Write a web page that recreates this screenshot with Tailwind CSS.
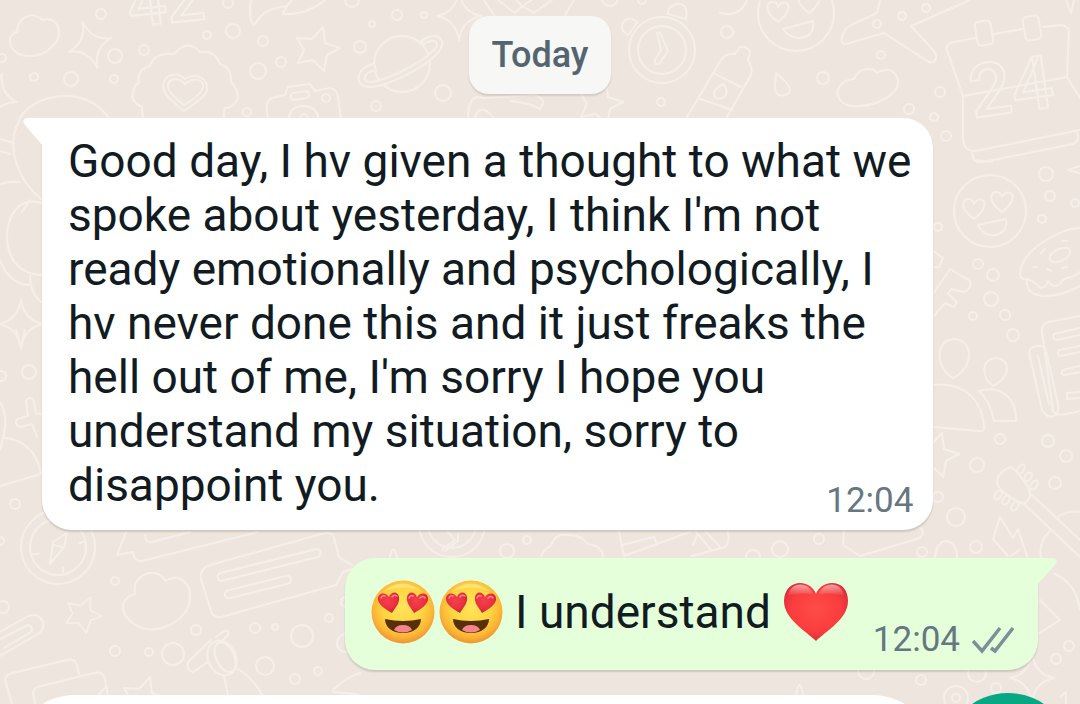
<!DOCTYPE html>
<html lang="en">
<head>
    <meta charset="UTF-8">
    <meta name="viewport" content="width=device-width, initial-scale=1.0">
    <title>Chat</title>
    <script src="https://cdn.jsdelivr.net/npm/@tailwindcss/browser@4"></script>
</head>
<body class="relative h-screen overflow-hidden bg-[#eee6de] font-[Roboto,sans-serif] text-[#111b21]">

    <!-- Wallpaper doodles -->
    <svg class="absolute inset-0 w-full h-full" viewBox="0 0 1080 704" preserveAspectRatio="xMidYMin slice" fill="none" stroke="#f6efe9" stroke-width="2" stroke-linecap="round" stroke-linejoin="round" aria-hidden="true">
        <defs>
            <path id="star" d="M6-22 8-6 23-1 10 6 7 22-4 11-19 14-13 1-20-11-5-10Z"/>
            <path id="spark" d="M0-24Q3-4 22 0 3 4 0 24-3 4-22 0-3-4 0-24Z"/>
            <path id="heart" d="M0 10C-16-2-11-11-5-10-1-10 0-6 0-5 1-7 4-11 8-9 14-6 9 3 0 10Z"/>
        </defs>

        <!-- bubbles -->
        <circle cx="101" cy="14" r="5"/><circle cx="2" cy="58" r="4"/><circle cx="34" cy="77" r="4"/><circle cx="71" cy="79" r="7"/><circle cx="114" cy="79" r="4"/><circle cx="115" cy="56" r="7"/><circle cx="144" cy="50" r="5"/>
        <circle cx="207" cy="35" r="4"/><circle cx="233" cy="31" r="7"/><circle cx="263" cy="41" r="5"/><circle cx="258" cy="71" r="8"/><circle cx="281" cy="62" r="5"/><circle cx="228" cy="3" r="5"/><circle cx="352" cy="0" r="7"/>
        <circle cx="397" cy="15" r="5"/><circle cx="424" cy="15" r="3"/><circle cx="372" cy="24" r="3"/><circle cx="360" cy="47" r="6"/><circle cx="443" cy="93" r="8"/><circle cx="376" cy="106" r="5"/><circle cx="247" cy="112" r="4"/>
        <circle cx="727" cy="32" r="6"/><circle cx="661" cy="102" r="4"/><circle cx="610" cy="-2" r="8"/><circle cx="642" cy="0" r="4"/><circle cx="877" cy="24" r="4"/><circle cx="902" cy="16" r="4"/><circle cx="926" cy="8" r="4"/>
        <circle cx="881" cy="55" r="4"/><circle cx="823" cy="78" r="6"/><circle cx="940" cy="92" r="5"/><circle cx="909" cy="109" r="5"/><circle cx="934" cy="117" r="4"/><circle cx="946" cy="136" r="5"/>
        <circle cx="1046" cy="174" r="7"/><circle cx="1050" cy="196" r="5"/><circle cx="1075" cy="203" r="4"/><circle cx="1042" cy="219" r="4"/><circle cx="938" cy="227" r="4"/><circle cx="978" cy="264" r="5"/><circle cx="993" cy="275" r="6"/>
        <circle cx="991" cy="299" r="7"/><circle cx="973" cy="316" r="4"/><circle cx="1005" cy="315" r="5"/><circle cx="1013" cy="335" r="6"/><circle cx="1000" cy="439" r="5"/><circle cx="1048" cy="441" r="6"/><circle cx="1066" cy="456" r="6"/>
        <circle cx="1055" cy="483" r="6"/><circle cx="977" cy="465" r="7"/><circle cx="938" cy="497" r="5"/><circle cx="956" cy="517" r="9"/><circle cx="976" cy="547" r="6"/><circle cx="922" cy="552" r="5"/>
        <circle cx="29" cy="372" r="7"/><circle cx="1" cy="376" r="5"/><circle cx="15" cy="504" r="5"/><circle cx="115" cy="581" r="4"/><circle cx="3" cy="607" r="6"/><circle cx="115" cy="651" r="5"/><circle cx="149" cy="652" r="4"/>
        <circle cx="196" cy="630" r="5"/><circle cx="173" cy="654" r="11"/><circle cx="255" cy="628" r="5"/><circle cx="275" cy="627" r="3"/><circle cx="302" cy="636" r="11"/><circle cx="329" cy="618" r="4"/><circle cx="265" cy="666" r="9"/>
        <circle cx="295" cy="679" r="5"/><circle cx="318" cy="671" r="4"/><circle cx="0" cy="541" r="4"/><circle cx="346" cy="602" r="5"/><circle cx="346" cy="643" r="9"/><circle cx="1069" cy="646" r="5"/><circle cx="1056" cy="659" r="5"/>
        <circle cx="977" cy="673" r="9"/><circle cx="996" cy="688" r="5"/><circle cx="956" cy="698" r="12"/><circle cx="956" cy="698" r="4"/><circle cx="866" cy="671" r="8"/><circle cx="921" cy="680" r="5"/>
        <circle cx="527" cy="540" r="4"/><circle cx="507" cy="551" r="7"/><circle cx="753" cy="557" r="7"/><circle cx="819" cy="539" r="5"/><circle cx="780" cy="549" r="8"/>

        <!-- stars and sparkles -->
        <use href="#star" x="317" y="49"/>
        <use href="#star" x="83" y="615" transform="rotate(8 83 615) translate(15 110) scale(.82)"/>
        <use href="#star" x="600" y="103"/>
        <use href="#star" x="936" y="455"/>
        <use href="#star" x="144" y="699"/>
        <use href="#spark" x="90" y="45" transform="rotate(-18 90 45)"/>
        <use href="#spark" x="459" y="16"/>
        <use href="#spark" x="-4" y="97" transform="rotate(14 -4 97)"/>
        <use href="#spark" x="21" y="324"/>
        <use href="#spark" x="1032" y="678"/>
        <path d="M1040 600 1060 620 1038 634"/>

        <!-- clouds -->
        <path d="M17 32Q18 17 32 15 39 16 42 20 53 16 58 27C64 42 44 57 29 56 12 56 8 43 11 36Q14 32 17 32Z"/>
        <path d="M854 79Q859 68 869 69 875 69 877 73 891 65 897 77C903 91 881 105 860 106 842 108 836 98 838 89Q842 80 854 79Z"/>
        <path d="M135 594C132 578 146 572 155 573Q163 575 165 581 180 572 189 588C194 608 181 622 162 628 140 634 122 619 123 605Q126 596 135 594Z"/>
        <path d="M541 556Q546 547 551 546 555 533 566 535 581 534 588 544 602 546 603 556"/>

        <!-- 42, paper plane, cone -->
        <text x="130" y="27" font-family="Roboto, sans-serif" font-size="68" font-weight="500" transform="rotate(-6 130 27)">42</text>
        <path d="M251 0Q248 19 254 25C259 18 263 9 287 6L283 14C302 15 317 7 325 0M287 6 292 0"/>
        <path d="M484 0 494 15M498 0 515 13 522 6 534 13 552 0M565 15 574 0M516 0 522 6 532 0"/>

        <!-- scalloped badge -->
        <path d="M143 118Q142 111 142 107 130 101 133 93 134 84 139 83 136 70 150 66 154 52 174 54 188 38 200 52 215 50 220 64 232 68 231 82 238 90 238 98 234 108 225 108 223 112 224 118"/>
        <path d="M184 111C174 103 162 94 163 85 164 76 176 70 185 79 198 71 208 80 207 90 205 98 193 104 184 111Z"/>
        <path d="M184 105C176 99 167 91 168 85 169 78 179 77 185 84 193 77 204 79 203 87 202 94 191 101 184 105Z"/>

        <!-- camera -->
        <path d="M268 118Q264 101 272 98L285 95 288 87 310 84 315 91 330 88Q337 89 338 97L341 118M289 118Q290 106 304 106 317 107 318 118"/>
        <rect x="291" y="92" width="18" height="7" rx="3" transform="rotate(-8 300 96)"/><circle cx="326" cy="98" r="4"/><circle cx="304" cy="118" r="4"/>

        <!-- planet -->
        <circle cx="402" cy="64" r="28"/>
        <path fill="#eee6de" d="M421 41C436 31 446 38 441 48 431 66 384 88 368 87 354 86 355 67 374 64L376 70C364 72 360 82 371 82 388 80 427 61 437 46 438 39 431 40 424 44Z"/>

        <!-- alarm clock -->
        <circle cx="662" cy="50" r="33"/><circle cx="662" cy="50" r="24"/>
        <path d="M628 35C616 28 624 17 632 19 636 20 637 23 637 23ZM668 14C668 4 680 1 685 7 688 13 686 17 686 19ZM657 33Q661 31 662 37L668 51 659 64Q653 65 655 60L661 50Z"/>

        <!-- bottle -->
        <path d="M687 117 718 65Q724 52 735 54L740 47Q747 46 750 52L748 60Q755 72 748 80L727 117M713 73 741 87M698 98 732 110M723 84C735 98 713 104 714 93Q715 88 723 84Z"/>
        <path d="M468 117Q469 93 482 98L535 95Q544 98 543 104L540 109Q531 103 510 101M475 117Q480 102 493 117"/>

        <!-- heart eyes faces -->
        <circle cx="796" cy="13" r="38"/><use href="#heart" x="778" y="12"/><use href="#heart" x="809" y="3"/><path d="M783 29 813 21C815 34 807 37 800 38 792 38 787 35 783 29Z"/>
        <circle cx="990" cy="211" r="36"/><use href="#heart" x="974" y="209"/><use href="#heart" x="1002" y="202"/><path d="M978 225 1006 219C1008 230 1001 234 995 235 987 236 981 231 978 225Z"/>

        <!-- aeroplane and drops -->
        <path d="M880 0 877 13 851 25C842 30 838 44 846 44L884 33 929 62C936 64 938 56 934 51L911 26 970 0M1066 0 1071 13 1074 0M776 73C800 92 787 97 779 95 772 91 776 83 776 73ZM720 13Q740 18 747 0"/>

        <!-- calendar -->
        <path d="M975 38 950 43Q946 46 947 50L963 96V140Q964 151 975 151L1080 130M994 34 1023 29M1043 27 1062 25Q1069 27 1069 31L1067 77 1080 98M963 96 1067 77M972 152 974 160Q977 163 983 162L1073 144Q1080 141 1077 132"/>
        <rect x="976" y="21" width="16" height="24" rx="4" transform="rotate(-9 984 33)"/><rect x="1024" y="16" width="16" height="24" rx="4" transform="rotate(-9 1032 28)"/>
        <text x="973" y="118" font-family="Roboto, sans-serif" font-size="74" font-weight="500" transform="rotate(-8 973 118)">24</text>
        <path d="M974 160 992 162M1080 166 1068 170 1080 173"/>

        <!-- doughnut -->
        <path d="M1080 228C1060 228 1021 250 1020 274Q1020 280 1027 279 1036 282 1040 288 1047 287 1048 281 1054 289 1060 284 1062 278 1072 277L1080 272M1027 280C1024 299 1052 301 1080 286"/>
        <ellipse cx="1060" cy="255" rx="11" ry="6" transform="rotate(-25 1060 255)"/>
        <path d="M1041 253 1045 249M1033 267 1037 267M1047 269 1051 271M1062 268 1067 267M1062 241 1067 241"/>

        <!-- arrow, people -->
        <path d="M933 294 950 269 970 281Q972 289 964 292L951 289 948 294 957 302 954 307 945 303 934 316M933 251 943 258 939 267H933"/>
        <path d="M953 378C936 369 934 340 954 339 975 340 973 369 953 378ZM933 385C966 381 983 402 984 429Q983 432 979 431L933 427"/>
        <path d="M993 386C982 378 980 359 996 358 1013 360 1009 379 993 386ZM979 391C1001 384 1017 399 1016 421L994 421Q990 401 979 391Z"/>

        <!-- notebook -->
        <path d="M1080 316 1048 322Q1041 325 1042 332L1053 411Q1056 418 1080 411"/>
        <path d="M1045 347C1030 343 1028 351 1030 357L1042 410Q1048 420 1056 415 1060 411 1057 399L1045 347M1038 356 1049 404"/>
        <path d="M1080 328 1054 334Q1052 339 1056 340L1080 335M1080 346 1059 350Q1056 354 1060 356L1080 352M1080 366 1063 370Q1060 374 1064 375L1080 372M1080 392 1067 393V399L1080 398"/>

        <!-- guitar and bolt -->
        <path d="M1010 467Q1016 469 1028 487C1033 497 1028 500 1024 504 1011 499 996 489 997 480Q999 472 1010 467ZM1032 495 1080 540M1024 504 1080 557M1058 517Q1068 510 1080 512M1050 531Q1038 542 1041 558M1000 517 1013 538 1018 529 1027 556M1000 517 993 539 1008 556M1011 556 1019 550"/>
        <ellipse cx="1021" cy="469" rx="3" ry="5" transform="rotate(35 1021 469)"/><ellipse cx="1028" cy="477" rx="3" ry="5" transform="rotate(35 1028 477)"/><ellipse cx="1034" cy="485" rx="3" ry="5" transform="rotate(35 1034 485)"/>
        <ellipse cx="998" cy="495" rx="3" ry="5" transform="rotate(35 998 495)"/><ellipse cx="1006" cy="500" rx="3" ry="5" transform="rotate(35 1006 500)"/><ellipse cx="1015" cy="506" rx="3" ry="5" transform="rotate(35 1015 506)"/>
        <path d="M935 557Q937 541 947 541 957 544 957 557M1055 574Q1076 583 1080 610"/>

        <!-- left edge -->
        <path d="M18 123C22 108 43 96 65 96 88 96 101 107 109 118M18 123C6 148 18 180 41 199M0 139 14 143M0 151 10 154M0 184Q9 181 20 182M41 203C17 196 7 218 7 238 8 260 20 274 41 275M0 260Q9 284 29 285M30 276Q30 293 41 302M22 212 30 200"/>
        <path d="M16 330 21 347 25 330M42 414 36 413 34 401Q30 395 26 401L28 416 17 419Q14 425 20 427L32 424 37 437M0 402Q9 416 3 438L0 450M0 486 41 474C38 455 26 440 5 438"/>

        <!-- compass -->
        <circle cx="58" cy="547" r="37"/><circle cx="58" cy="547" r="28"/><path d="M50 564 53 542 67 533 64 547ZM53 545 63 547M32 554H38M79 543 84 542M63 568V572"/>

        <!-- speech bubbles -->
        <path d="M126 532 117 555 133 552Q134 562 142 561L258 532M145 535Q145 543 152 542L190 532"/>
        <path d="M210 565 325 533Q332 532 334 538L339 557 352 565M210 565Q199 569 201 579L211 611Q213 618 221 617L336 585 343 572 352 569"/>
        <rect x="216" y="561" width="106" height="8" rx="4" transform="rotate(-14 269 565)"/><rect x="224" y="583" width="68" height="8" rx="4" transform="rotate(-14 258 587)"/>

        <!-- pencil, cards, flower -->
        <path d="M0 632 28 616C42 611 49 627 38 634L0 656M0 639 28 625Q34 627 31 632L4 648"/>
        <path d="M12 704 5 680Q6 674 12 673L67 660Q75 658 77 665L79 674M35 704 33 692Q35 687 41 686L94 673Q103 671 105 679L108 696M99 694 105 688"/>
        <ellipse cx="222" cy="658" rx="14" ry="18" transform="rotate(-24 222 658)"/><ellipse cx="225" cy="657" rx="9" ry="16" transform="rotate(-24 225 657)"/>
        <path d="M211 640 188 662Q186 670 193 672L208 662M216 637 224 631Q230 630 228 635L220 643M224 676 228 695M238 669Q254 679 262 695M333 690Q345 678 360 673M333 692 358 694"/>

        <!-- strip between messages -->
        <circle cx="452" cy="524" r="33"/><circle cx="452" cy="524" r="24"/>
        <path d="M448 532 455 540 442 550M458 534V541L445 551M390 557Q393 542 397 557M619 532 624 556 690 532M622 545 654 537 657 545M692 556 725 547Q730 543 728 532M706 532 720 547M696 532 711 550M693 545 697 535M844 530 843 545 860 556 920 538Q926 531 920 528"/>
        <path d="M796 695Q800 675 803 695M1061 696 1066 692V704"/>
    </svg>

    <main class="relative flex flex-col pt-4 px-[42px]">
        <div class="self-center rounded-[20px] bg-[#f7f7f5] px-[23px] py-[15px] text-[36px] leading-[48px] font-medium text-[#54656f] shadow-[0_2px_2px_rgba(0,0,0,0.12)]">Today</div>

        <!-- Received message -->
        <article class="relative mt-6 self-start rounded-[30px] rounded-tl-none bg-white pt-4 pr-[22px] pb-[18px] pl-[26px] shadow-[0_2px_2px_rgba(0,0,0,0.14)]">
            <svg class="absolute top-0 -left-5 w-[21px] h-[30px]" viewBox="0 0 21 30" fill="#fff" aria-hidden="true"><path d="M21 0H6C1 0 0 4 3 7L21 28Z"/></svg>
            <p class="text-[46px] leading-[54px]">Good day, I hv given a thought to what we<br>spoke about yesterday, I think I'm not<br>ready emotionally and psychologically, I<br>hv never done this and it just freaks the<br>hell out of me, I'm sorry I hope you<br>understand my situation, sorry to<br>disappoint you.</p>
            <time class="absolute right-5 bottom-[7px] text-[35px] leading-[44px] text-[#667781]">12:04</time>
        </article>

        <!-- Sent message -->
        <article class="relative mt-7 flex self-end rounded-[30px] rounded-tr-none bg-[#e4ffda] pt-[22px] pr-6 pb-2 pl-[26px] shadow-[0_2px_2px_rgba(0,0,0,0.14)]">
            <svg class="absolute top-0 -right-5 w-[21px] h-[30px]" viewBox="0 0 21 30" fill="#e4ffda" aria-hidden="true"><path d="M0 0H15C20 0 21 4 18 7L0 27Z"/></svg>
            <p class="flex items-start text-[46px] leading-[64px]">
                <svg class="w-[64px] h-[64px] mr-1" viewBox="0 0 64 64" role="img" aria-label="Heart eyes">
                    <defs>
                        <radialGradient id="face" cx=".5" cy=".42" r=".56">
                            <stop offset="0" stop-color="#ffe45c"/><stop offset=".55" stop-color="#ffd640"/><stop offset=".85" stop-color="#fbb534"/><stop offset="1" stop-color="#ef9a34"/>
                        </radialGradient>
                        <radialGradient id="eye" cx=".45" cy=".4" r=".65">
                            <stop offset="0" stop-color="#f5414d"/><stop offset=".65" stop-color="#e82f3f"/><stop offset="1" stop-color="#b92131"/>
                        </radialGradient>
                        <g id="love">
                            <circle cx="32" cy="32" r="31.5" fill="url(#face)"/>
                            <path d="M12 12Q31-5 52 12 32 3 12 12Z" fill="#fff3b0" opacity=".5"/>
                            <path d="M21 33C14 29 8 25 7 20 6 13 14 11 18 17 20 11 27 11 28 17 29 23 24 28 21 33Z" fill="url(#eye)"/>
                            <path d="M43 33C40 28 35 23 36 17 37 11 44 11 46 17 50 11 58 13 57 20 56 25 50 29 43 33Z" fill="url(#eye)"/>
                            <path d="M10 18Q11 15 14 16M21 17Q23 14 26 16M38 18Q39 15 42 16M49 18Q52 15 54 18" fill="none" stroke="#ff8a8e" stroke-width="1.5" stroke-linecap="round"/>
                            <path d="M14 39Q32 43 50 39C50 47 43 53 32 53 21 53 14 47 14 39Z" fill="#57300b"/>
                            <path d="M23 50Q25 45 32 45 39 45 41 50 32 55 23 50Z" fill="#f2868b"/>
                        </g>
                    </defs>
                    <use href="#love"/>
                </svg>
                <svg class="w-[64px] h-[64px] mr-3" viewBox="0 0 64 64" role="img" aria-label="Heart eyes"><use href="#love"/></svg>
                <span>I understand</span>
                <svg class="w-[66px] h-[64px] ml-3" viewBox="0 0 66 64" role="img" aria-label="Red heart">
                    <defs>
                        <radialGradient id="red" cx=".5" cy=".45" r=".6">
                            <stop offset="0" stop-color="#ff4c46"/><stop offset=".65" stop-color="#fa3d3e"/><stop offset="1" stop-color="#d42a38"/>
                        </radialGradient>
                        <linearGradient id="shine" x2="0" y2="1"><stop stop-color="#fff" stop-opacity=".55"/><stop offset="1" stop-color="#fff" stop-opacity="0"/></linearGradient>
                    </defs>
                    <path d="M33 61C23 51 1 39 1 21 1 9 9 3 17 3 25 3 31 8 33 14 35 8 41 3 49 3 58 3 65 9 65 21 65 39 43 51 33 61Z" fill="url(#red)"/>
                    <path d="M5 16C7 1 27 1 30 15 24 13 13 13 5 16ZM36 15C39 1 59 1 61 16 53 13 42 13 36 15Z" fill="url(#shine)"/>
                </svg>
            </p>
            <div class="mt-[38px] ml-6 flex items-center text-[35px] leading-[44px] text-[#667781]">
                <time>12:04</time>
                <svg class="ml-3 w-[42px] h-[28px]" viewBox="0 0 42 28" fill="none" stroke="#7e8f98" stroke-width="3.5" role="img" aria-label="Delivered"><path d="M1 15 10 25 28 2M19 22 23 25 41 2"/></svg>
            </div>
        </article>
    </main>

    <!-- Message box -->
    <form class="relative mt-[23px] flex items-start gap-2 pl-[11px] pr-2">
        <input type="text" aria-label="Message" class="mt-[2px] h-32 min-w-0 flex-1 rounded-full bg-white px-12 text-[46px] outline-none">
        <button type="button" aria-label="Voice message" class="h-32 w-32 shrink-0 rounded-full bg-[#08a884]"></button>
    </form>
</body>
</html>
